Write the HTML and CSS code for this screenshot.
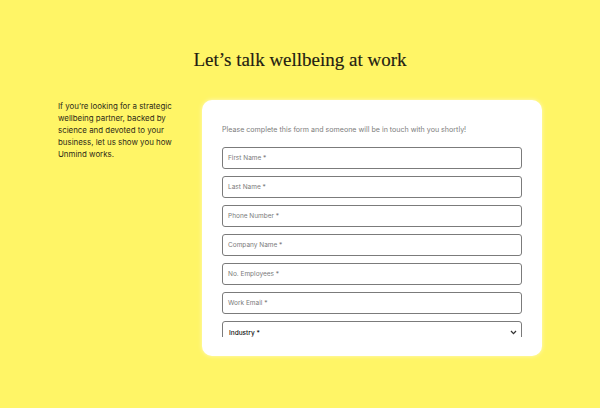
FILE: index.html
```html
<!DOCTYPE html>
<html>
<head>
<meta charset="utf-8">
<link rel="stylesheet" href="styles.css">
</head>
<body>
<div class="page">
  <h1 class="title">Let’s talk wellbeing at work</h1>
  <div class="content">
    <p class="intro">If you’re looking for a strategic wellbeing partner, backed by science and devoted to your business, let us show you how Unmind works.</p>
    <div class="card">
      <div class="frame">
        <p class="note">Please complete this form and someone will be in touch with you shortly!</p>
        <div class="fields">
          <div class="field">First Name *</div>
          <div class="field">Last Name *</div>
          <div class="field">Phone Number *</div>
          <div class="field">Company Name *</div>
          <div class="field">No. Employees *</div>
          <div class="field">Work Email *</div>
          <div class="field select"><span>Industry *</span>
            <svg class="chev" width="7" height="5" viewBox="0 0 7 5"><path d="M1 1 L3.5 3.6 L6 1" fill="none" stroke="#333" stroke-width="1.3"/></svg>
          </div>
        </div>
      </div>
    </div>
  </div>
</div>
</body>
</html>
```

FILE: styles.css
```css
html, body {
  margin: 0;
  padding: 0;
}
body {
  background: #fff566;
  width: 600px;
  height: 408px;
  overflow: hidden;
  font-family: Inter, "Noto Sans", sans-serif;
}
.page {
  padding-top: 46px;
}
.title {
  margin: 0;
  text-align: center;
  font-family: "Liberation Serif", "DejaVu Serif", serif;
  font-weight: normal;
  font-size: 19px;
  line-height: 28px;
  color: #231d12;
  -webkit-text-stroke: 0.15px #231d12;
}
.content {
  display: flex;
  align-items: flex-start;
  margin-top: 26px;
  padding-left: 58px;
}
.intro {
  margin: 0;
  width: 132px;
  font-size: 7.9px;
  line-height: 12px;
  color: #2e2a18;
}
.card {
  margin-left: 12px;
  width: 340px;
  height: 256px;
  box-sizing: border-box;
  background: #fff;
  border-radius: 10px;
  padding: 20px 20px 19px 20px;
  box-shadow: 0 0 4px rgba(255, 255, 255, 0.6);
}
.frame {
  height: 217px;
  overflow: hidden;
}
.note {
  margin: 5px 0 0 0;
  font-size: 7.1px;
  line-height: 10px;
  color: #7d7d7d;
}
.fields {
  display: flex;
  flex-direction: column;
  gap: 7px;
  margin-top: 12px;
  width: 300px;
}
.field {
  height: 22px;
  box-sizing: border-box;
  border: 1px solid #7b7b7b;
  border-radius: 3px;
  padding: 0 5px;
  display: flex;
  align-items: center;
  font-size: 6.5px;
  color: #7a7a7a;
}
.select {
  justify-content: space-between;
  color: #111;
  font-weight: 500;
  padding-top: 1px;
  padding-left: 6px;
}
.chev {
  margin-right: -1px;
}
```
